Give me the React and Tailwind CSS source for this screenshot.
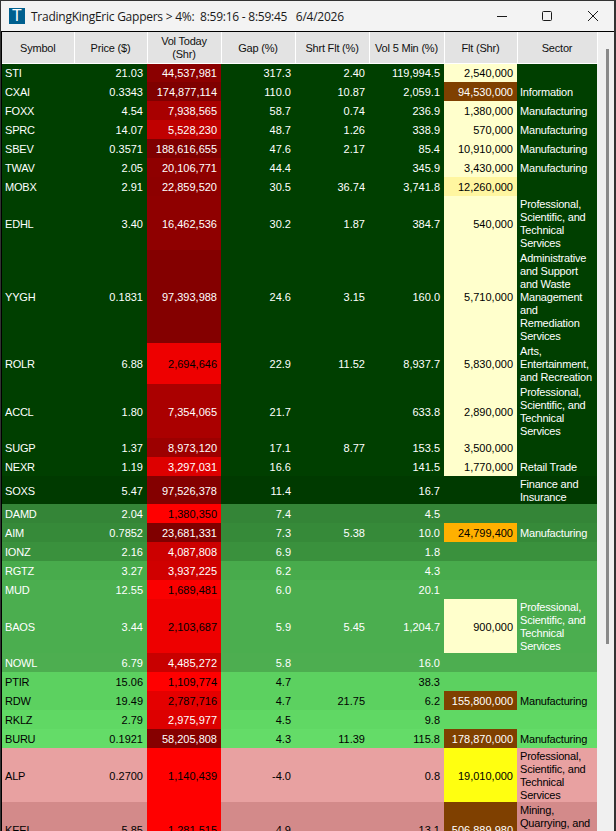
import React from 'react';

const PROF = 'Professional,\nScientific, and\nTechnical\nServices';
const ADMIN = 'Administrative\nand Support\nand Waste\nManagement\nand\nRemediation\nServices';
const MFG = 'Manufacturing';

const DARK = 'bg-[#003f00] text-white';
const cream = 'bg-[#ffffcc] text-black';
const brown = 'bg-[#7f4000] text-white';

const rows = [
  { h: 'h-[19px]', sym: 'STI', price: '21.03', vol: '44,537,981', volc: 'bg-[#8b0000] text-white', gap: '317.3', shrt: '2.40', v5: '119,994.5', flt: '2,540,000', fltc: cream, sector: '', bg: DARK },
  { h: 'h-[19px]', sym: 'CXAI', price: '0.3343', vol: '174,877,114', volc: 'bg-[#7f0000] text-white', gap: '110.0', shrt: '10.87', v5: '2,059.1', flt: '94,530,000', fltc: brown, sector: 'Information', bg: DARK },
  { h: 'h-[19px]', sym: 'FOXX', price: '4.54', vol: '7,938,565', volc: 'bg-[#a80000] text-white', gap: '58.7', shrt: '0.74', v5: '236.9', flt: '1,380,000', fltc: cream, sector: MFG, bg: DARK },
  { h: 'h-[19px]', sym: 'SPRC', price: '14.07', vol: '5,528,230', volc: 'bg-[#c00000] text-white', gap: '48.7', shrt: '1.26', v5: '338.9', flt: '570,000', fltc: cream, sector: MFG, bg: DARK },
  { h: 'h-[19px]', sym: 'SBEV', price: '0.3571', vol: '188,616,655', volc: 'bg-[#7f0000] text-white', gap: '47.6', shrt: '2.17', v5: '85.4', flt: '10,910,000', fltc: cream, sector: MFG, bg: DARK },
  { h: 'h-[19px]', sym: 'TWAV', price: '2.05', vol: '20,106,771', volc: 'bg-[#8f0000] text-white', gap: '44.4', shrt: '', v5: '345.9', flt: '3,430,000', fltc: cream, sector: MFG, bg: DARK },
  { h: 'h-[19px]', sym: 'MOBX', price: '2.91', vol: '22,859,520', volc: 'bg-[#8d0000] text-white', gap: '30.5', shrt: '36.74', v5: '3,741.8', flt: '12,260,000', fltc: 'bg-[#fff6a0] text-black', sector: '', bg: DARK },
  { h: 'h-[54px]', sym: 'EDHL', price: '3.40', vol: '16,462,536', volc: 'bg-[#8f0000] text-white', gap: '30.2', shrt: '1.87', v5: '384.7', flt: '540,000', fltc: cream, sector: PROF, bg: DARK },
  { h: 'h-[93px]', sym: 'YYGH', price: '0.1831', vol: '97,393,988', volc: 'bg-[#840000] text-white', gap: '24.6', shrt: '3.15', v5: '160.0', flt: '5,710,000', fltc: cream, sector: ADMIN, bg: DARK },
  { h: 'h-[41px]', sym: 'ROLR', price: '6.88', vol: '2,694,646', volc: 'bg-[#ee0000] text-black', gap: '22.9', shrt: '11.52', v5: '8,937.7', flt: '5,830,000', fltc: cream, sector: 'Arts,\nEntertainment,\nand Recreation', bg: DARK },
  { h: 'h-[54px]', sym: 'ACCL', price: '1.80', vol: '7,354,065', volc: 'bg-[#aa0000] text-white', gap: '21.7', shrt: '', v5: '633.8', flt: '2,890,000', fltc: cream, sector: PROF, bg: DARK },
  { h: 'h-[19px]', sym: 'SUGP', price: '1.37', vol: '8,973,120', volc: 'bg-[#9c0000] text-white', gap: '17.1', shrt: '8.77', v5: '153.5', flt: '3,500,000', fltc: cream, sector: '', bg: DARK },
  { h: 'h-[19px]', sym: 'NEXR', price: '1.19', vol: '3,297,031', volc: 'bg-[#dd0000] text-white', gap: '16.6', shrt: '', v5: '141.5', flt: '1,770,000', fltc: cream, sector: 'Retail Trade', bg: DARK },
  { h: 'h-[28px]', sym: 'SOXS', price: '5.47', vol: '97,526,378', volc: 'bg-[#840000] text-white', gap: '11.4', shrt: '', v5: '16.7', flt: '', fltc: '', sector: 'Finance and\nInsurance', bg: 'bg-[#003a00] text-white' },
  { h: 'h-[19px]', sym: 'DAMD', price: '2.04', vol: '1,380,350', volc: 'bg-[#ff0000] text-black', gap: '7.4', shrt: '', v5: '4.5', flt: '', fltc: '', sector: '', bg: 'bg-[#348537] text-white' },
  { h: 'h-[19px]', sym: 'AIM', price: '0.7852', vol: '23,681,331', volc: 'bg-[#800000] text-white', gap: '7.3', shrt: '5.38', v5: '10.0', flt: '24,799,400', fltc: 'bg-[#ffb000] text-black', sector: MFG, bg: 'bg-[#368a39] text-white' },
  { h: 'h-[19px]', sym: 'IONZ', price: '2.16', vol: '4,087,808', volc: 'bg-[#cc0000] text-white', gap: '6.9', shrt: '', v5: '1.8', flt: '', fltc: '', sector: '', bg: 'bg-[#3a913d] text-white' },
  { h: 'h-[19px]', sym: 'RGTZ', price: '3.27', vol: '3,937,225', volc: 'bg-[#d00000] text-white', gap: '6.2', shrt: '', v5: '4.3', flt: '', fltc: '', sector: '', bg: 'bg-[#48ab4c] text-white' },
  { h: 'h-[19px]', sym: 'MUD', price: '12.55', vol: '1,689,481', volc: 'bg-[#fa0000] text-black', gap: '6.0', shrt: '', v5: '20.1', flt: '', fltc: '', sector: '', bg: 'bg-[#4bae4f] text-white' },
  { h: 'h-[54px]', sym: 'BAOS', price: '3.44', vol: '2,103,687', volc: 'bg-[#ee0000] text-black', gap: '5.9', shrt: '5.45', v5: '1,204.7', flt: '900,000', fltc: cream, sector: PROF, bg: 'bg-[#4bae4f] text-white' },
  { h: 'h-[19px]', sym: 'NOWL', price: '6.79', vol: '4,485,272', volc: 'bg-[#c80000] text-white', gap: '5.8', shrt: '', v5: '16.0', flt: '', fltc: '', sector: '', bg: 'bg-[#4dae50] text-white' },
  { h: 'h-[19px]', sym: 'PTIR', price: '15.06', vol: '1,109,774', volc: 'bg-[#ff0000] text-black', gap: '4.7', shrt: '', v5: '38.3', flt: '', fltc: '', sector: '', bg: 'bg-[#5cd160] text-black' },
  { h: 'h-[19px]', sym: 'RDW', price: '19.49', vol: '2,787,716', volc: 'bg-[#e40000] text-black', gap: '4.7', shrt: '21.75', v5: '6.2', flt: '155,800,000', fltc: brown, sector: MFG, bg: 'bg-[#5cd160] text-black' },
  { h: 'h-[19px]', sym: 'RKLZ', price: '2.79', vol: '2,975,977', volc: 'bg-[#dd0000] text-white', gap: '4.5', shrt: '', v5: '9.8', flt: '', fltc: '', sector: '', bg: 'bg-[#60d864] text-black' },
  { h: 'h-[19px]', sym: 'BURU', price: '0.1921', vol: '58,205,808', volc: 'bg-[#860000] text-white', gap: '4.3', shrt: '11.39', v5: '115.8', flt: '178,870,000', fltc: brown, sector: MFG, bg: 'bg-[#64dc68] text-black' },
  { h: 'h-[54px]', sym: 'ALP', price: '0.2700', vol: '1,140,439', volc: 'bg-[#ff0000] text-black', gap: '-4.0', shrt: '', v5: '0.8', flt: '19,010,000', fltc: 'bg-[#ffff10] text-black', sector: PROF, bg: 'bg-[#e8a1a1] text-black' },
  { h: 'h-[54px]', sym: 'KEEL', price: '5.85', vol: '1,281,515', volc: 'bg-[#ff0000] text-black', gap: '-4.9', shrt: '', v5: '13.1', flt: '506,889,980', fltc: brown, sector: 'Mining,\nQuarrying, and\nOil and Gas\nExtraction', bg: 'bg-[#d38a8a] text-black' },
];

const headers = ['Symbol', 'Price ($)', 'Vol Today\n(Shr)', 'Gap (%)', 'Shrt Flt (%)', 'Vol 5 Min (%)', 'Flt (Shr)', 'Sector'];

const TitleBar = () => (
  <div className="flex items-center h-[30px] pl-[8px] bg-[#f3f3f3] rounded-t-[8px]">
    <div className="flex items-center justify-center w-[16px] h-[16px] bg-[#00608f] text-white text-[16px] leading-none font-['Liberation_Sans',sans-serif]">
      T
    </div>
    <span className="ml-[6px] whitespace-pre text-[12px] tracking-[-0.25px] text-[#1a1a1a] font-['Open_Sans',sans-serif]">
      {'TradingKingEric Gappers > 4%:  8:59:16 - 8:59:45   6/4/2026'}
    </span>
    <svg className="ml-auto mr-[16px]" width="101" height="12" viewBox="0 0 101 12" fill="none" stroke="#1a1a1a" strokeWidth="1">
      <path d="M0 6.5h10" />
      <rect x="45.5" y="1.5" width="9" height="9" rx="1" />
      <path d="M91 1l10 10M101 1L91 11" />
    </svg>
  </div>
);

const App = () => {
  return (
    <div className="w-[616px] h-[831px] overflow-hidden bg-[#333333] pl-[1px] pr-[2px] pt-[1px] font-['Liberation_Sans',sans-serif] text-[11px] leading-[13px]">
      <div className="h-full flex flex-col bg-[#f0f0f0]">
        <TitleBar />
        <div className="flex-1 flex min-h-0 border-t border-black">
          <div className="w-[1px] bg-black" />
          <table className="table-fixed border-collapse w-[595px] h-fit">
            <colgroup>
              <col className="w-[72px]" />
              <col className="w-[73px]" />
              <col className="w-[74px]" />
              <col className="w-[74px]" />
              <col className="w-[74px]" />
              <col className="w-[75px]" />
              <col className="w-[73px]" />
              <col className="w-[80px]" />
            </colgroup>
            <thead>
              <tr className="h-[31px] bg-[#e3e3e3] text-[#111111]">
                {headers.map((label) => (
                  <th key={label} className="p-0 pt-[2px] font-normal text-center whitespace-pre-line border-r border-b border-white tracking-[-0.2px]">
                    {label}
                  </th>
                ))}
              </tr>
            </thead>
            <tbody>
              {rows.map((row) => (
                <tr key={row.sym} className={`${row.h} ${row.bg}`}>
                  <td className="p-0 pt-[2px] pl-[3px] tracking-[-0.2px]">{row.sym}</td>
                  <td className="p-0 pt-[2px] pr-[4px] text-right">{row.price}</td>
                  <td className={`p-0 pt-[2px] pr-[4px] text-right ${row.volc}`}>{row.vol}</td>
                  <td className="p-0 pt-[2px] pr-[4px] text-right">{row.gap}</td>
                  <td className="p-0 pt-[2px] pr-[4px] text-right">{row.shrt}</td>
                  <td className="p-0 pt-[2px] pr-[4px] text-right">{row.v5}</td>
                  <td className={`p-0 pt-[2px] pr-[4px] text-right ${row.fltc}`}>{row.flt}</td>
                  <td className="p-0 pt-[2px] pl-[3px] whitespace-pre-line tracking-[-0.2px]">{row.sector}</td>
                </tr>
              ))}
            </tbody>
          </table>
          <div className="flex-1 pt-[17px] pl-[8px] bg-[#f0f0f0]">
            <div className="w-[3px] h-[595px] bg-[#8a8a8a]" />
          </div>
        </div>
      </div>
    </div>
  );
};

export default App;
